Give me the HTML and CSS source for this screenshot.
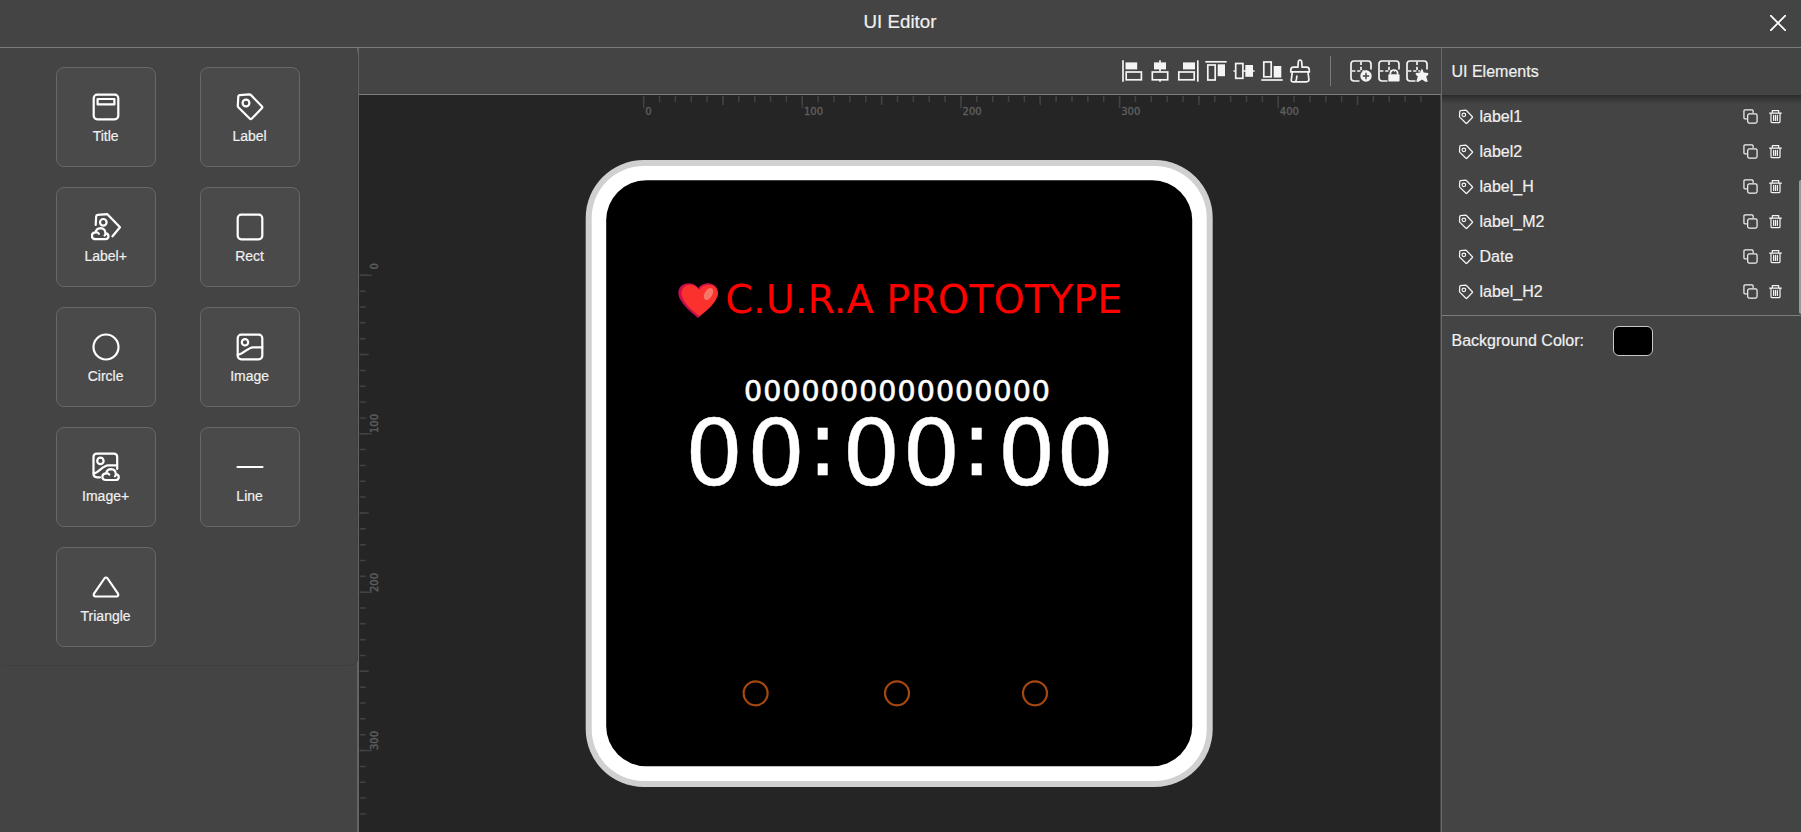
FILE: index.html
```html
<!DOCTYPE html>
<html lang="en">
<head>
<meta charset="utf-8">
<title>UI Editor</title>
<link rel="stylesheet" href="styles.css">
</head>
<body>
<svg class="defs" width="0" height="0" aria-hidden="true">
  <symbol id="tag" viewBox="0 0 30 30"><path d="M4.8 3.1 14.4 2.3Q15.2 2.3 15.8 2.9L27 14.5Q27.7 15.3 27 16L16.6 26.8Q15.7 27.6 14.9 26.8L3.3 15.2Q2.7 14.6 2.8 13.8L3.3 4.4Q3.4 3.3 4.8 3.1Z"/><circle cx="11" cy="11" r="3.4"/></symbol>
  <symbol id="copy" viewBox="0 0 16 16"><rect x="5" y="5.2" width="10" height="9.8" rx="1.6"/><path d="M3.6 10.6H2.2Q1 10.6 1 9.4V2.2Q1 1 2.2 1H9.6Q10.8 1 10.8 2.2V3.6"/></symbol>
  <symbol id="trash" viewBox="0 0 16 16"><path d="M1.7 4.3H14.3M4.6 4V1.7H11.4V4M3.2 4.6V13.2Q3.2 14.6 4.6 14.6H11.4Q12.8 14.6 12.8 13.2V4.6M6 6.8V12.2M8 6.8V12.2M10 6.8V12.2"/></symbol>
  <symbol id="grid" viewBox="0 0 24 24"><path d="M10.5 22H5Q2 22 2 19V5Q2 2 5 2H19Q22 2 22 5V10.5"/><path d="M12 2.5V11M3 12H11.5" stroke-dasharray="3.4 1.8"/><path d="M13.3 12H18" stroke-dasharray="2 1.6"/></symbol>
</svg>
<div class="app">
  <header class="header">
    <h1 class="title">UI Editor</h1>
    <svg class="close" viewBox="0 0 16 16"><path d="M.7.7 15.3 15.3M15.3.7.7 15.3"/></svg>
  </header>
  <main class="main">
    <aside class="palette">
      <div class="tools">
        <div class="tool"><svg class="icon" viewBox="0 0 30 30"><rect x="2.7" y="2.7" width="24.6" height="24.6" rx="3.5"/><rect x="6.6" y="7" width="16.8" height="5.4"/></svg><span>Title</span></div>
        <div class="tool"><svg class="icon"><use href="#tag"/></svg><span>Label</span></div>
        <div class="tool"><svg class="icon" viewBox="0 0 30 30"><path d="M4.7 13 5.2 4.2Q5.3 2.9 6.6 2.8L16.4 2.2 29 15.2 21.5 24.3"/><circle cx="12.3" cy="10.3" r="3.3"/><path d="M4.5 27.2Q1 27.2.8 23.7 1 20.5 4.6 20.3 5.4 16.4 9.5 16.2 14.2 16.5 14.4 21.2 17.4 21.6 17.5 24.4 17.3 27.2 14.4 27.2ZM4.6 20.3Q7 20 7.8 21.8M14.4 21.2Q14.6 22.6 13.6 23.5"/></svg><span>Label+</span></div>
        <div class="tool"><svg class="icon" viewBox="0 0 30 30"><rect x="2.7" y="2.7" width="24.6" height="24.6" rx="3.5"/></svg><span>Rect</span></div>
        <div class="tool"><svg class="icon" viewBox="0 0 30 30"><circle cx="15" cy="15" r="12.5"/></svg><span>Circle</span></div>
        <div class="tool"><svg class="icon" viewBox="0 0 30 30"><rect x="2.7" y="2.7" width="24.6" height="24.6" rx="3.5"/><circle cx="10" cy="10.3" r="3.2"/><path d="M2.7 22.8C8 22.5 13 15.3 18 15.3H27.3"/></svg><span>Image</span></div>
        <div class="tool"><svg class="icon" viewBox="0 0 30 30"><path d="M9 25.3H6Q2.5 25.3 2.5 21.8V5.1Q2.5 1.6 6 1.6H22.7Q26.2 1.6 26.2 5.1V17"/><circle cx="9.4" cy="8.9" r="3.2"/><path d="M2.7 21.4C7 21.2 12 13.3 17 13.3H26"/><path d="M15 28Q11.4 28 11.3 24.7 11.5 21.5 15.2 21.3 16 17.3 20 17.2 24.6 17.4 24.8 22 27.7 22.4 27.8 25.1 27.6 28 24.7 28ZM15.2 21.3Q17.6 21 18.3 22.6M24.8 22Q25 23.4 24 24.3"/></svg><span>Image+</span></div>
        <div class="tool"><svg class="icon" viewBox="0 0 30 30"><path d="M2.5 15H27.5"/></svg><span>Line</span></div>
        <div class="tool"><svg class="icon" viewBox="0 0 30 30"><path d="M13.4 6.5Q15 4.5 16.6 6.5L27 21.6Q28 24.2 25.3 24.5H4.7Q2 24.2 3 21.6Z"/></svg><span>Triangle</span></div>
      </div>
    </aside>
    <section class="workspace">
      <div class="toolbar">
        <div class="group">
          <svg viewBox="0 0 24 24"><path d="M3 1.3V22.7"/><rect class="solid" x="5.5" y="3.4" width="11.7" height="7"/><rect x="6.2" y="13" width="15.2" height="7.8"/></svg>
          <svg viewBox="0 0 24 24"><path d="M12 1.3V22.7" stroke-dasharray="11.5 8.2"/><rect class="solid" x="6" y="3.4" width="12" height="7"/><rect x="4.3" y="13" width="15.4" height="7.8"/></svg>
          <svg viewBox="0 0 24 24"><path d="M21.8 1.3V22.7"/><rect class="solid" x="7" y="3.4" width="12" height="7"/><rect x="2.8" y="13" width="15.4" height="7.8"/></svg>
          <svg viewBox="0 0 24 24"><path d="M1.3 2.8H22.7"/><rect x="3.8" y="6" width="7.4" height="15"/><rect class="solid" x="13.7" y="5.3" width="7.3" height="11.9"/></svg>
          <svg viewBox="0 0 24 24"><path d="M1.5 12H3M11 12H22.6"/><rect x="3.7" y="4.5" width="7.2" height="14.8"/><rect class="solid" x="13.3" y="6" width="7.7" height="11.8"/></svg>
          <svg viewBox="0 0 24 24"><path d="M1.3 21H22.7"/><rect x="3.8" y="3" width="7.4" height="14.8"/><rect class="solid" x="13.7" y="7" width="7.6" height="11.6"/></svg>
          <svg viewBox="0 0 24 24"><path d="M9.9 8.2 10.3 3Q10.5 1 12 1 13.5 1 13.7 3L14.1 8.2H18.6Q21.3 8.4 21.3 11V12.9H2.8V11Q2.8 8.4 5.4 8.2ZM4.3 13.2 3.2 21.3Q3.2 22.8 4.8 22.8H18.5Q21 22.8 20.9 20.5L20 13.2M8.9 16.5Q8.8 20 7.7 22.5"/></svg>
        </div>
        <span class="divider"></span>
        <div class="group">
          <svg viewBox="0 0 24 24"><use href="#grid"/><circle class="solid" cx="17" cy="17" r="5.7"/><path class="cut" d="M17 13.8V20.2M13.8 17H20.2"/></svg>
          <svg viewBox="0 0 24 24"><use href="#grid"/><rect class="solid" x="11.3" y="15.2" width="11.3" height="7.2" rx="1"/><path d="M13.4 15.4V14Q13.6 11 17 11 20.4 11 20.6 14V15.4"/></svg>
          <svg viewBox="0 0 24 24"><use href="#grid"/><path class="solid" d="M16.9 9.5 18.7 13.6 23.2 13.9V15.8L21.2 17.6 22.8 22.8H20.3L17 20.4 13.7 22.8H11.2L12.8 17.6 10.8 15.8V13.9L15.2 13.6Z"/></svg>
        </div>
      </div>
      <svg class="stage" viewBox="359 95 1081 737">
        <g class="ticks">
          <path d="M642.9 99H1422" stroke-width="6" stroke-dasharray="1.5 14.364"/>
          <path d="M722.2 100.5H1422" stroke-width="9" stroke-dasharray="1.5 157.14"/>
          <path d="M642.9 102H1422" stroke-width="12" stroke-dasharray="1.5 157.14"/>
          <path d="M362.7 274.6V816" stroke-width="6" stroke-dasharray="1.5 14.34"/>
          <path d="M364.2 353.8V816" stroke-width="9" stroke-dasharray="1.5 156.9"/>
          <path d="M365.7 274.6V816" stroke-width="12" stroke-dasharray="1.5 156.9"/>
        </g>
        <g class="marks">
          <text x="645.3" y="114.7">0</text><text x="804" y="114.7">100</text><text x="962.6" y="114.7">200</text><text x="1121.2" y="114.7">300</text><text x="1279.8" y="114.7">400</text>
          <text transform="translate(377.5 269.5) rotate(-90)">0</text>
          <text transform="translate(377.5 433) rotate(-90)">100</text>
          <text transform="translate(377.5 592) rotate(-90)">200</text>
          <text transform="translate(377.5 750) rotate(-90)">300</text>
        </g>
        <rect x="585.7" y="160" width="627" height="627" rx="58" fill="#d0d0d0"/>
        <rect x="591.7" y="166" width="615" height="615" rx="52" fill="#fff"/>
        <rect x="606.2" y="180.3" width="586" height="586" rx="40" fill="#000"/>
        <path d="M698 318C692 313 678.3 302 678.3 293C678.3 287 683 283.3 688.5 283.3C693 283.3 696.5 285.5 698.2 288.5C700 285.5 703.5 283.3 708 283.3C713.5 283.3 718 287 718 293C718 302 704 313 698 318Z" fill="#c70d4c"/>
        <path d="M699.5 316C694 312 681.5 302 681.5 293C681.5 288 685.5 284.7 690 284.7C694.5 284.7 697.5 287 699.2 290C701 287 704 284.7 708.6 284.7C714 284.7 717.8 288 717.8 293C717.8 302 705 312 699.5 316Z" fill="#fb312e"/>
        <ellipse cx="708.5" cy="294" rx="3.8" ry="6.6" transform="rotate(32 708.5 294)" fill="#f57768"/>
        <text class="dial red" x="725.3" y="313.3" font-size="39.65" textLength="397" lengthAdjust="spacing">C.U.R.A PROTOTYPE</text>
        <text class="dial small" x="744" y="401.4" textLength="306" lengthAdjust="spacing">0000000000000000</text>
        <text class="dial big" x="714 776 822.7 871.3 931.3 976.7 1026.7 1085" y="484.7 484.7 474.7 484.7 484.7 474.7 484.7 484.7">00:00:00</text>
        <g fill="none" stroke="#a5470f" stroke-width="2.2"><circle cx="755.6" cy="693.3" r="12"/><circle cx="897" cy="693.3" r="12"/><circle cx="1035" cy="693.3" r="12"/></g>
      </svg>
    </section>
    <aside class="inspector">
      <h2 class="heading">UI Elements</h2>
      <div class="list">
        <div class="row"><svg class="tag"><use href="#tag"/></svg><span class="name">label1</span><svg class="act copy"><use href="#copy"/></svg><svg class="act"><use href="#trash"/></svg></div>
        <div class="row"><svg class="tag"><use href="#tag"/></svg><span class="name">label2</span><svg class="act copy"><use href="#copy"/></svg><svg class="act"><use href="#trash"/></svg></div>
        <div class="row"><svg class="tag"><use href="#tag"/></svg><span class="name">label_H</span><svg class="act copy"><use href="#copy"/></svg><svg class="act"><use href="#trash"/></svg></div>
        <div class="row"><svg class="tag"><use href="#tag"/></svg><span class="name">label_M2</span><svg class="act copy"><use href="#copy"/></svg><svg class="act"><use href="#trash"/></svg></div>
        <div class="row"><svg class="tag"><use href="#tag"/></svg><span class="name">Date</span><svg class="act copy"><use href="#copy"/></svg><svg class="act"><use href="#trash"/></svg></div>
        <div class="row"><svg class="tag"><use href="#tag"/></svg><span class="name">label_H2</span><svg class="act copy"><use href="#copy"/></svg><svg class="act"><use href="#trash"/></svg></div>
        <span class="thumb"></span>
      </div>
      <div class="background"><span class="caption">Background Color:</span><span class="swatch"></span></div>
    </aside>
  </main>
</div>
</body>
</html>
```
FILE: styles.css
```css
* { box-sizing: border-box; }
body { margin: 0; background: #444; color: #f0f0f0; font-family: "Liberation Sans", Arial, sans-serif; font-size: 16px; -webkit-text-stroke: 0.2px #f0f0f0; overflow: hidden; }
svg { display: block; flex: none; fill: none; stroke: #f4f4f4; stroke-linecap: round; stroke-linejoin: round; -webkit-text-stroke: 0; }
.defs { position: absolute; }
.app { display: flex; flex-direction: column; height: 832px; }
.header { display: grid; grid-template-columns: 1fr auto 1fr; align-items: center; height: 48px; padding: 0 15.5px 1px 14.5px; border-bottom: 1px solid #7c7c7c; }
.title { grid-column: 2; margin: 0; font-size: 18.72px; font-weight: 400; line-height: 22px; padding-bottom: 2px; }
.close { width: 16px; height: 16px; justify-self: end; stroke-width: 1.8; stroke: #fff; }
.main { display: grid; grid-template-columns: 359px 1082px 1fr; flex: 1; min-height: 0; }
.palette { border-right: 2px solid #646464; }
.tools { display: grid; grid-template-columns: 100px 100px; grid-auto-rows: 100px; column-gap: 44px; row-gap: 20px; width: 358px; height: 618px; padding: 19px 0 0 55.6px; background: #444; border-radius: 8px; box-shadow: inset -1px -1px 0 #3f3f3f; }
.tool { display: flex; flex-direction: column; align-items: center; gap: 6px; padding-top: 24px; border: 1px solid #676767; border-radius: 8px; background: #4a4a4a; font-size: 14px; line-height: 16px; }
.icon { width: 30px; height: 30px; stroke: #fff; stroke-width: 2.2; }
.workspace { display: flex; flex-direction: column; min-width: 0; }
.toolbar { display: flex; justify-content: flex-end; align-items: center; height: 47px; padding-right: 12.5px; border-bottom: 1px solid #7c7c7c; }
.group { display: flex; gap: 4px; }
.group svg { width: 24px; height: 24px; stroke-width: 1.7; stroke-linecap: butt; stroke-linejoin: miter; }
.group .solid { fill: #f4f4f4; stroke: none; }
.group .cut { stroke: #444; stroke-width: 1.4; }
.divider { width: 1px; height: 30px; margin: 0 17.5px 0 18.5px; background: #7a7a7a; }
.stage { width: 1081px; height: 737px; background: #252525; stroke: none; }
.ticks { stroke: #424242; stroke-linecap: butt; }
.marks { fill: #5e5e5e; stroke: #5e5e5e; stroke-width: 0.4px; font: 10px "DejaVu Sans", sans-serif; }
.dial { fill: #fff; font-family: "DejaVu Sans", sans-serif; }
.dial.red { fill: #f00; }
.dial.small { font-size: 28.5px; stroke: #fff; stroke-width: 0.6px; }
.dial.big { font-size: 91.5px; text-anchor: middle; stroke: #fff; stroke-width: 0.4px; }
.inspector { border-left: 1px solid #6a6a6a; }
.heading { display: flex; align-items: center; height: 47px; margin: 0; padding-left: 9.5px; font-size: 16px; font-weight: 400; }
.list { position: relative; height: 221px; padding: 4px 18px 0 15.5px; border-bottom: 1px solid #7c7c7c; background: linear-gradient(#2c2c2c, #444 9px); }
.row { display: flex; align-items: center; height: 35px; }
.tag { width: 16px; height: 16px; stroke-width: 2.3; }
.name { flex: 1; padding-left: 6px; }
.act { width: 15px; height: 15px; stroke-width: 1.3; }
.copy { margin-right: 10px; }
.thumb { position: absolute; right: 0; top: 85px; width: 2.5px; height: 134px; border-radius: 2px 0 0 2px; background: #999; }
.background { display: flex; align-items: center; height: 50px; padding-left: 9.5px; }
.caption { width: 161px; }
.swatch { width: 40px; height: 30px; border: 1px solid #c8c8c8; border-radius: 6px; background: #000; }
```
